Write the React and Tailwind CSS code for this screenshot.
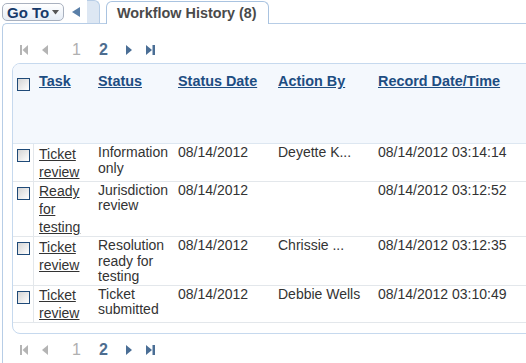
import React from 'react';

const rows = [
  { task: 'Ticket review', status: 'Information only', date: '08/14/2012', by: 'Deyette K...', rec: '08/14/2012 03:14:14' },
  { task: 'Ready for testing', status: 'Jurisdiction review', date: '08/14/2012', by: '', rec: '08/14/2012 03:12:52' },
  { task: 'Ticket review', status: 'Resolution ready for testing', date: '08/14/2012', by: 'Chrissie ...', rec: '08/14/2012 03:12:35' },
  { task: 'Ticket review', status: 'Ticket submitted', date: '08/14/2012', by: 'Debbie Wells', rec: '08/14/2012 03:10:49' },
];

const cols = 'grid grid-cols-[21px_59px_80px_100px_100px_1fr]';

const Checkbox = () => (
  <span className="block w-[13px] h-[13px] border border-[#1f4a78] bg-gradient-to-br from-[#d4d4d4] to-white" />
);

const Pager = () => (
  <div className="flex items-center h-[20px]">
    <svg className="ml-[17px]" width="8" height="10" viewBox="0 0 8 10">
      <rect x="0" y="0" width="2" height="10" fill="#b4b4b4" />
      <polygon points="8,0 8,10 2.5,5" fill="#b4b4b4" />
    </svg>
    <svg className="ml-[14px]" width="6" height="10" viewBox="0 0 6 10">
      <polygon points="6,0 6,10 0,5" fill="#b4b4b4" />
    </svg>
    <span className="ml-[24px] w-[8px] text-center text-[16px] text-[#b0b0b0]">1</span>
    <span className="ml-[19px] w-[8px] text-center text-[16px] font-bold text-[#4d6d90]">2</span>
    <svg className="ml-[19px]" width="6" height="10" viewBox="0 0 6 10">
      <polygon points="0,0 0,10 6,5" fill="#4a6e95" />
    </svg>
    <svg className="ml-[14px]" width="9" height="10" viewBox="0 0 9 10">
      <polygon points="0,0 0,10 6,5" fill="#4a6e95" />
      <rect x="6.5" y="0" width="2.5" height="10" fill="#4a6e95" />
    </svg>
  </div>
);

export default function App() {
  return (
    <div className="w-[526px] h-[363px] overflow-hidden bg-white font-['Liberation_Sans',Arial,sans-serif] text-[#333]">
      {/* tab strip */}
      <div className="relative z-10 flex items-start h-[24px] w-[700px]">
        <button className="mt-[3px] ml-[2px] w-[62px] h-[18px] flex items-center pl-[4px] rounded-[5px] border border-[#a9b1bf] bg-gradient-to-b from-white to-[#e6edf6] text-[15px] leading-none font-bold text-[#173a6a]">
          Go To
          <svg className="ml-[3px] mt-[1px]" width="7" height="5" viewBox="0 0 7 5">
            <polygon points="0,0 7,0 3.5,4.5" fill="#555" />
          </svg>
        </button>
        <svg className="mt-[7px] ml-[8px]" width="8" height="10" viewBox="0 0 8 10">
          <polygon points="8,0 8,10 0,5" fill="#5a7fa8" />
        </svg>
        <div className="ml-[7px] w-[13px] h-[23px] bg-[#dde7f3] border-r border-t border-[#b7cde6] rounded-tr-[6px]" />
        <div className="ml-[6px] mt-[1px] w-[163px] h-[23px] bg-white border border-b-0 border-[#a9c3e0] rounded-t-[6px] pl-[10px] pt-[3px] text-[14.4px] leading-[17px] font-bold text-[#4a4a4a]">
          Workflow History (8)
        </div>
      </div>

      {/* panel */}
      <div className="-mt-px ml-[2px] w-[700px] h-[400px] border-l border-t border-[#b7cde6] rounded-tl-[5px] pt-[16px]">
        <Pager />
        <div className="mt-[3px] ml-[9px] w-[600px] border border-[#c6d9ee] rounded-[8px] overflow-hidden bg-white pb-[10px]">
          <div className={`${cols} h-[80px] bg-[#f4f8fd] border-b border-[#dde7f1] text-[14.4px] leading-[17px] font-bold text-[#1d4d82]`}>
            <div className="pl-[4px] pt-[14px]"><Checkbox /></div>
            <div className="pl-[5px] pt-[9px]"><span className="underline">Task</span></div>
            <div className="pl-[5px] pt-[9px]"><span className="underline">Status</span></div>
            <div className="pl-[5px] pt-[9px]"><span className="underline">Status Date</span></div>
            <div className="pl-[5px] pt-[9px]"><span className="underline">Action By</span></div>
            <div className="pl-[5px] pt-[9px]"><span className="underline">Record Date/Time</span></div>
          </div>
          {rows.map((r, i) => (
            <div key={i} className={`${cols} border-b border-[#e3e7eb] text-[14px] leading-[15.5px]`}>
              <div className="pl-[4px] pt-[5px] border-r border-[#e3e7eb]"><Checkbox /></div>
              <div className="pl-[5px] pr-[2px] pt-[0.5px] leading-[18px]">
                <span className="underline">{r.task}</span>
              </div>
              <div className="pl-[5px] pr-[2px] pt-[1px]">{r.status}</div>
              <div className="pl-[5px] pt-[1px] whitespace-nowrap">{r.date}</div>
              <div className="pl-[5px] pt-[1px] whitespace-nowrap">{r.by}</div>
              <div className="pl-[5px] pt-[1px] whitespace-nowrap">{r.rec}</div>
            </div>
          ))}
        </div>
        <div className="mt-[6px]">
          <Pager />
        </div>
      </div>
    </div>
  );
}
